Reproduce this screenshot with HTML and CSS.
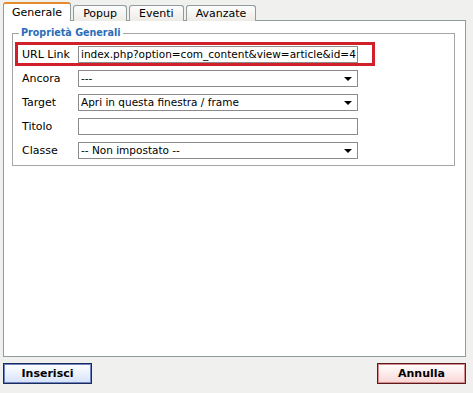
FILE: index.html
```html
<!DOCTYPE html>
<html lang="it">
  <head>
    <meta charset="UTF-8" />
    <title>Inserisci/Modifica Link</title>
    <link rel="stylesheet" href="styles.css">
  </head>
  <body>
    <div class="tabs">
      <span class="tab current">Generale</span>
      <span class="tab">Popup</span>
      <span class="tab">Eventi</span>
      <span class="tab">Avanzate</span>
    </div>

    <div class="panel">
      <fieldset>
        <legend>Proprietà Generali</legend>

        <div class="row highlight">
          <label>URL Link</label>
          <div class="field" id="href">index.php?option=com_content&amp;view=article&amp;id=4</div>
        </div>
        <div class="row">
          <label>Ancora</label>
          <div class="field select" id="anchor">---</div>
        </div>
        <div class="row">
          <label>Target</label>
          <div class="field select" id="target">Apri in questa finestra / frame</div>
        </div>
        <div class="row">
          <label>Titolo</label>
          <div class="field" id="title"></div>
        </div>
        <div class="row">
          <label>Classe</label>
          <div class="field select" id="classlist">-- Non impostato --</div>
        </div>
      </fieldset>
    </div>

    <div class="buttons">
      <button class="btn insert">Inserisci</button>
      <button class="btn cancel">Annulla</button>
    </div>
  </body>
</html>
```

FILE: styles.css
```css
body {
  margin: 0;
  padding: 3px 7px 0 3px;
  background: #f0f0ee;
  font-family: "DejaVu Sans", Verdana, sans-serif;
  font-size: 10.5px;
  color: #000;
}
.tabs {
  display: flex;
  align-items: flex-end;
  gap: 2px;
  height: 17px;
}
.tab {
  position: relative;
  top: 1px;
  height: 15px;
  line-height: 15px;
  padding: 0 9px;
  border: 1px solid #919b9c;
  border-bottom: none;
  border-radius: 3px 3px 0 0;
  background: linear-gradient(#fdfdfd, #ecebe6);
  font-size: 11px;
  color: #000;
}
.tab.current {
  height: 17px;
  line-height: 17px;
  padding: 0 8px;
  background: #fff;
  border-top: 2px solid #e68b2c;
  z-index: 1;
}
.panel {
  height: 329px;
  border: 1px solid #919b9c;
  background: #fff;
  padding: 6px 10px 0 8px;
}
fieldset {
  margin: 0;
  padding: 3px 0 3px 2px;
  border: 1px solid #a5a5a5;
}
legend {
  margin-left: 4px;
  padding: 0 2px;
  line-height: 12px;
  font-size: 9.6px;
  font-weight: bold;
  color: #2b6db5;
}
.row {
  display: flex;
  align-items: center;
  width: 343px;
  height: 18px;
  padding: 0 7px 0 4px;
  border: 3px solid transparent;
}
.row.highlight {
  border-color: #d0202a;
}
.row label {
  width: 56px;
  flex-shrink: 0;
  font-size: 11px;
}
.field {
  box-sizing: border-box;
  width: 280px;
  height: 17px;
  margin-top: 1px;
  padding: 0 2px;
  border: 1px solid #8b8b8b;
  line-height: 15px;
  white-space: nowrap;
  overflow: hidden;
  background: #fff;
}
.select {
  position: relative;
}
.select::after {
  content: "";
  position: absolute;
  right: 5px;
  top: 6px;
  border-left: 4px solid transparent;
  border-right: 4px solid transparent;
  border-top: 4px solid #000;
}
.buttons {
  display: flex;
  justify-content: space-between;
  margin-top: 6px;
}
.btn {
  width: 89px;
  height: 21px;
  padding: 0;
  font: bold 11px "DejaVu Sans", Verdana, sans-serif;
  color: #000;
}
.btn.insert {
  border: 1px solid #1c2a5a;
  box-shadow: inset 0 0 0 1px #6d84c4;
  background: linear-gradient(#ffffff, #d6e2fb);
}
.btn.cancel {
  border: 1px solid #5a1c1c;
  box-shadow: inset 0 0 0 1px #d68a8a;
  background: linear-gradient(#ffffff, #fad6d6);
}
```
